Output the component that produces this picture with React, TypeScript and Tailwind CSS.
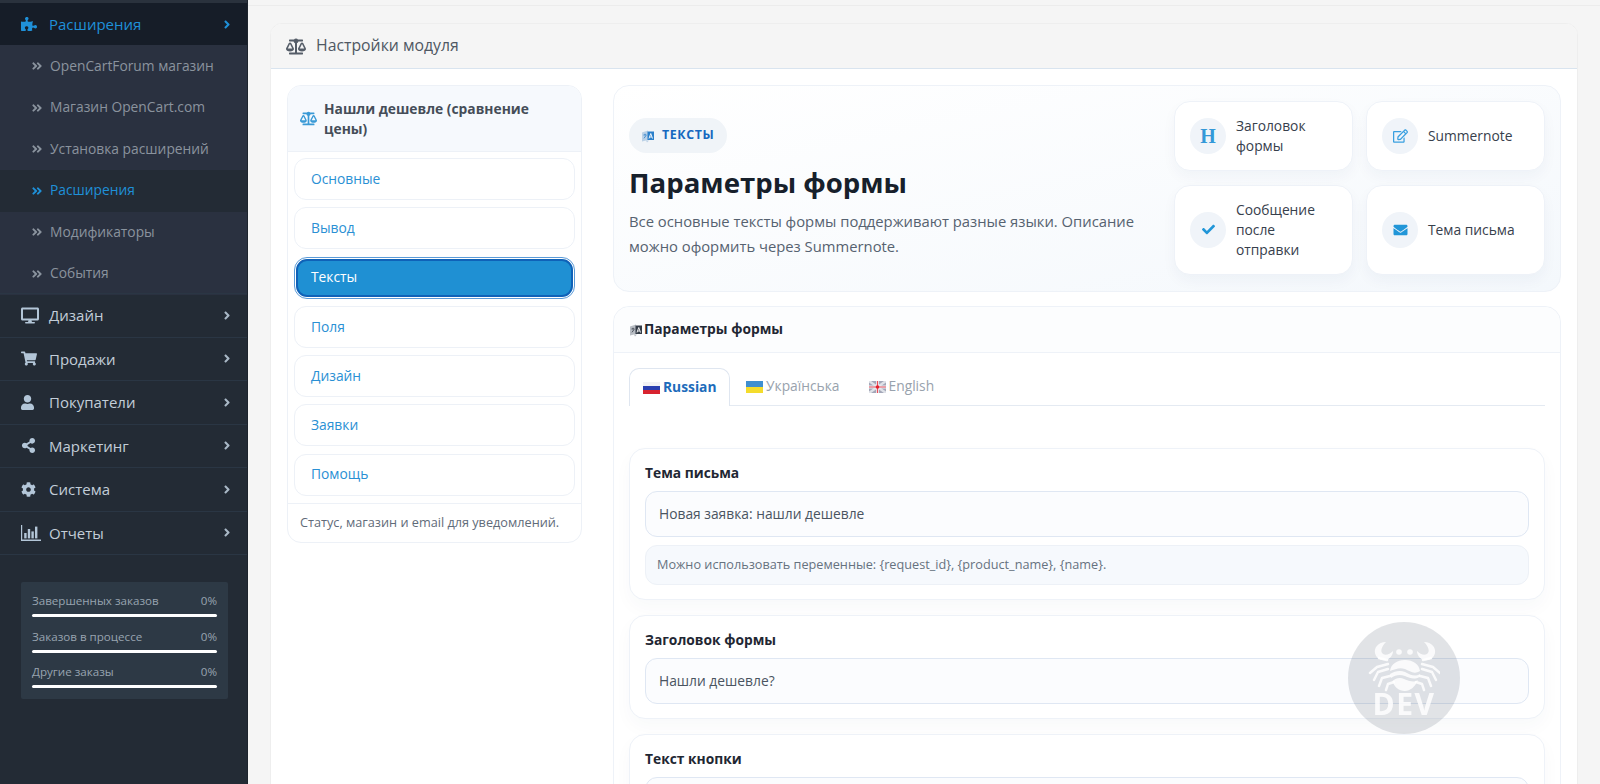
import React from "react";
import {
  FaPuzzlePiece, FaAngleDoubleRight, FaAngleRight, FaDesktop, FaShoppingCart, FaUser, FaShareAlt, FaCog,
  FaBalanceScale, FaCheck, FaEnvelope, FaRegEdit,
} from "react-icons/fa";

const font = { fontFamily: '"Open Sans", "Noto Sans", sans-serif' };

function ChartIcon() {
  return (
    <svg width="20" height="16" viewBox="0 0 20 16" fill="currentColor">
      <path d="M0 0h1.2v14.6H20V16H0z" />
      <rect x="3.2" y="8" width="2.4" height="5.4" />
      <rect x="6.8" y="4" width="2.4" height="9.4" />
      <rect x="10.4" y="6.4" width="2.4" height="7" />
      <rect x="14" y="1.6" width="2.4" height="11.8" />
    </svg>
  );
}

function LangIcon({ className, back, front }: { className?: string; back: string; front: string }) {
  return (
    <svg className={className} viewBox="0 0 14 14">
      <path d="M1 3.500L7 1.500V11L1 12.500z" fill={back} opacity="0.55" />
      <path d="M2.500 6h3M4 4.800V6M3 9.300L5 6.500" stroke={front} strokeWidth="0.8" fill="none" />
      <rect x="6.500" y="2.500" width="6.500" height="8.500" fill={front} />
      <path d="M8 9.500L9.750 4.500L11.500 9.500M8.700 8h2.100" stroke="#ffffff" strokeWidth="0.9" fill="none" />
      <path d="M5 11.500L6 13.500L8 11.500" fill={back} opacity="0.55" />
    </svg>
  );
}

function SubItem({ label, active }: { label: string; active?: boolean }) {
  return (
    <div className={`h-[41.5px] flex items-center pl-[31px] gap-[7px] text-[13.8px] ${active ? "bg-[#232b35] text-[#1f90d8]" : "text-[#8a939e]"}`}>
      <FaAngleDoubleRight className="w-[12px] h-[12px]" />
      <span>{label}</span>
    </div>
  );
}

function MainItem({ icon, label }: { icon: React.ReactNode; label: string }) {
  return (
    <div className="h-[43.5px] flex items-center pl-[21px] pr-[14px] border-b border-[#2a3644] text-[#c2cdd8] text-[15px]">
      <span className="w-[28px] flex items-center text-[#b3c6d8]">{icon}</span>
      <span className="flex-1">{label}</span>
      <FaAngleRight className="w-[12px] h-[13px] text-[#a9b8c6]" />
    </div>
  );
}

function Stat({ label }: { label: string }) {
  return (
    <div className="h-[35.7px]">
      <div className="flex justify-between text-[11.6px] leading-[16px] text-[#98a4b0] pt-[2px]">
        <span>{label}</span>
        <span>0%</span>
      </div>
      <div className="mt-[5px] h-[3px] rounded-full bg-white" />
    </div>
  );
}

function Sidebar() {
  return (
    <aside className="w-[248px] shrink-0 h-full bg-[#232b35] border-r border-[#1d242d]">
      <div className="h-[3px] bg-[#2a323d]" />
      <div className="h-[42px] bg-[#161d28] flex items-center pl-[21px] pr-[14px] text-[#1f90d8] text-[15px]">
        <span className="w-[28px] flex items-center"><FaPuzzlePiece className="w-[16px] h-[16px]" /></span>
        <span className="flex-1">Расширения</span>
        <FaAngleRight className="w-[12px] h-[13px]" />
      </div>
      <div className="bg-[#2a3140] pt-[0.5px]">
        <SubItem label="OpenCartForum магазин" />
        <SubItem label="Магазин OpenCart.com" />
        <SubItem label="Установка расширений" />
        <SubItem label="Расширения" active />
        <SubItem label="Модификаторы" />
        <SubItem label="События" />
      </div>
      <div className="border-t border-[#2a3644] mt-[-1.5px]" />
      <MainItem icon={<FaDesktop className="w-[18px] h-[17px]" />} label="Дизайн" />
      <MainItem icon={<FaShoppingCart className="w-[16px] h-[15px]" />} label="Продажи" />
      <MainItem icon={<FaUser className="w-[13px] h-[15px]" />} label="Покупатели" />
      <MainItem icon={<FaShareAlt className="w-[15px] h-[15px]" />} label="Маркетинг" />
      <MainItem icon={<FaCog className="w-[15px] h-[15px]" />} label="Система" />
      <MainItem icon={<ChartIcon />} label="Отчеты" />
      <div className="ml-[21px] mr-[19px] mt-[27px] h-[117px] rounded-[2px] bg-[#2d3945] px-[11px] pt-[9px]">
        <Stat label="Завершенных заказов" />
        <Stat label="Заказов в процессе" />
        <Stat label="Другие заказы" />
      </div>
    </aside>
  );
}

function NavItem({ label, active }: { label: string; active?: boolean }) {
  if (active) {
    return (
      <div className="h-[42px] rounded-[13px] border border-[#5b9bd8] bg-white p-[1px]">
        <div className="h-full rounded-[11px] bg-[#1f90d3] border-2 border-[#0f62b8] flex items-center pl-[13px] text-white text-[13.8px]">
          {label}
        </div>
      </div>
    );
  }
  return (
    <div className="h-[42px] rounded-[12px] bg-white border border-[#edf1f7] flex items-center pl-[16px] text-[#2a90d4] text-[13.8px]">
      {label}
    </div>
  );
}

function LeftNav() {
  return (
    <div className="w-[295px] shrink-0 self-start rounded-[14px] border border-[#edf1f7] bg-white overflow-hidden">
      <div className="h-[66px] bg-[#f6f9fd] border-b border-[#edf1f7] flex items-center pl-[12px] pr-[10px] gap-[7px]">
        <FaBalanceScale className="w-[17px] h-[15px] shrink-0 text-[#3a9ad6]" />
        <div className="text-[13.8px] leading-[20px] font-bold text-[#454d58]">Нашли дешевле (сравнение цены)</div>
      </div>
      <div className="px-[6px] pt-[6px] pb-[7px] flex flex-col gap-[7.3px]">
        <NavItem label="Основные" />
        <NavItem label="Вывод" />
        <NavItem label="Тексты" active />
        <NavItem label="Поля" />
        <NavItem label="Дизайн" />
        <NavItem label="Заявки" />
        <NavItem label="Помощь" />
      </div>
      <div className="border-t border-[#edf1f7] h-[39px] flex items-center pl-[12px] text-[12.7px] text-[#5f6b79]">
        Статус, магазин и email для уведомлений.
      </div>
    </div>
  );
}

function Tile({ icon, label }: { icon: React.ReactNode; label: React.ReactNode }) {
  return (
    <div className="rounded-[16px] bg-white border border-[#eef2f8] shadow-[0_6px_14px_rgba(30,60,110,0.04)] flex items-center pl-[15px] pr-[20px] gap-[10px]">
      <span className="w-[36px] h-[36px] shrink-0 rounded-full bg-[#f0f4f9] flex items-center justify-center text-[#2196d8]">{icon}</span>
      <span className="text-[13.8px] leading-[20px] text-[#37404c]">{label}</span>
    </div>
  );
}

function Hero() {
  return (
    <div className="h-[207px] rounded-[16px] border border-[#eef2f8] bg-gradient-to-br from-white to-[#f4f8fc] flex pl-[15px] pr-[15px]">
      <div className="flex-1 pt-[32px] pr-[20px]">
        <div className="w-[98px] h-[35px] rounded-full bg-[#f0f4f8] flex items-center pl-[12px] gap-[7px] text-[#1668c0] text-[12.4px] font-bold tracking-[0.6px]">
          <LangIcon className="w-[14px] h-[14px]" back="#8fb4d8" front="#2a7fca" />
          <span>ТЕКСТЫ</span>
        </div>
        <h1 className="mt-[8px] text-[27.6px] leading-[42px] font-bold text-[#17202b]">Параметры формы</h1>
        <p className="mt-[6px] text-[14.8px] leading-[24.500px] text-[#566270]">
          Все основные тексты формы поддерживают разные языки. Описание можно оформить через Summernote.
        </p>
      </div>
      <div className="w-[371px] shrink-0 pt-[15px] grid grid-cols-2 gap-x-[13px] gap-y-[13.5px] grid-rows-[70px_90.500px] content-start">
        <Tile icon={<span className="text-[20px] font-bold leading-none text-[#3498d8]" style={{ fontFamily: '"Liberation Serif", serif' }}>H</span>} label="Заголовок формы" />
        <Tile icon={<FaRegEdit className="w-[15px] h-[14px] text-[#3aa0e0]" />} label="Summernote" />
        <Tile icon={<FaCheck className="w-[13px] h-[13px]" />} label="Сообщение после отправки" />
        <Tile icon={<FaEnvelope className="w-[15px] h-[14px]" />} label="Тема письма" />
      </div>
    </div>
  );
}

function FlagRu() {
  return (
    <svg width="17" height="12" viewBox="0 0 17 12"><rect width="17" height="4" fill="#f2f2f5" /><rect y="4" width="17" height="4" fill="#2a3fb0" /><rect y="8" width="17" height="4" fill="#d8232f" /></svg>
  );
}
function FlagUa() {
  return (
    <svg width="17" height="12" viewBox="0 0 17 12"><rect width="17" height="6" fill="#3f8fd0" /><rect y="6" width="17" height="6" fill="#f4dc2c" /></svg>
  );
}
function FlagEn() {
  return (
    <svg width="17" height="12" viewBox="0 0 17 12">
      <rect width="17" height="12" fill="#a3a7b8" />
      <path d="M0 0l17 12M17 0L0 12" stroke="#dfe2e8" strokeWidth="2.4" />
      <path d="M8.500 0v12M0 6h17" stroke="#eceff4" strokeWidth="3" />
      <path d="M8.500 0v12M0 6h17" stroke="#e8505a" strokeWidth="1.200" />
      <circle cx="8.500" cy="6" r="1.800" fill="#e2202c" />
    </svg>
  );
}

function Tabs() {
  return (
    <div className="flex h-[38px] border-b border-[#e4eaf2] items-stretch text-[13.8px]">
      <div className="w-[101px] h-[38px] rounded-t-[10px] border border-b-0 border-[#dfe6f0] bg-white flex items-center pl-[13px] gap-[3px] font-bold text-[#1d6cbb]">
        <FlagRu /><span>Russian</span>
      </div>
      <div className="flex items-center pl-[16px] gap-[3px] text-[#98a2ad]"><FlagUa /><span>Українська</span></div>
      <div className="flex items-center pl-[29px] gap-[3px] text-[#98a2ad]"><FlagEn /><span>English</span></div>
    </div>
  );
}

function Field({ label, value, hint }: { label: string; value?: string; hint?: string }) {
  return (
    <div className="rounded-[16px] bg-white border border-[#eef2f8] shadow-[0_8px_18px_rgba(30,60,110,0.03)] px-[15px] pt-[14px] pb-[14px]">
      <div className="text-[13.8px] leading-[20px] font-bold text-[#1f2733]">{label}</div>
      <div className="mt-[8px] h-[46px] rounded-[12px] bg-[#fbfcfe] border border-[#dfe7f3] flex items-center pl-[13px] text-[13.8px] text-[#4a5461]">{value}</div>
      {hint && (
        <div className="mt-[8px] h-[40px] rounded-[12px] bg-[#f6f9fd] border border-[#edf1f7] flex items-center pl-[11px] text-[12.7px] text-[#66727f]">{hint}</div>
      )}
    </div>
  );
}

function Watermark() {
  return (
    <div className="fixed left-[1348px] top-[622px] w-[112px] h-[112px] rounded-full bg-[rgba(90,100,115,0.18)] flex flex-col items-center text-white/85">
      <svg width="72" height="54" viewBox="0 0 72 54" className="mt-[18px] shrink-0" fill="none">
        <path d="M18 2C10 2 6 8 7 13C8 18 13 21 18 20C22 19 25 15 25 11C22 14 18 16 15 14C12 12 13 7 18 2z" fill="currentColor" />
        <path transform="translate(74 0) scale(-1 1)" d="M18 2C10 2 6 8 7 13C8 18 13 21 18 20C22 19 25 15 25 11C22 14 18 16 15 14C12 12 13 7 18 2z" fill="currentColor" />
        <circle cx="31" cy="12" r="2.800" fill="currentColor" />
        <circle cx="42" cy="12" r="2.800" fill="currentColor" />
        <path d="M22 31C23 24 29 20 37 20C45 20 51 24 52 31C46 35 42 31 37 29C32 27 27 29 22 31z" fill="currentColor" />
        <path d="M22 34C27 31 32 30 37 32C42 35 47 37 52 34L51.500 37C46 40 42 38 37 36C32 34 27 35 23 38z" fill="currentColor" />
        <path d="M24.500 41C28 38 32 37 36 39C41 41 46 43 50 40C47 47 42 51 37 51C31 51 26 47 24.500 41z" fill="currentColor" />
        <path d="M20 24L9 27L2 33M20 29L10 32L6 40M22 36L14 38L11 46M26 42L20 44L18 50M54 24L65 27L72 33M54 29L64 32L68 40M52 36L60 38L63 46M48 42L54 44L56 50M19 20L11 18M55 20L63 18" stroke="currentColor" strokeWidth="2.400" strokeLinecap="round" strokeLinejoin="round" />
      </svg>
      <div className="text-[30px] leading-[22px] font-bold mt-[-1px] tracking-[1.5px]">DEV</div>
    </div>
  );
}

export default function App() {
  return (
    <div className="w-[1600px] h-[784px] overflow-hidden flex bg-[#f5f5f5]" style={font}>
      <Sidebar />
      <main className="flex-1 min-w-0 h-full">
        <div className="h-[6px] bg-[#f5f5f5] border-b border-[#ececec]" />
        <div className="ml-[22px] mr-[22px] mt-[17px] h-[800px] rounded-t-[12px] bg-white border border-[#eeeeee] overflow-hidden">
          <div className="h-[45px] bg-[#f5f5f5] border-b border-[#d9e4ef] flex items-center pl-[15px] gap-[10px] text-[#4f5863] text-[15.8px]">
            <FaBalanceScale className="w-[20px] h-[17px] text-[#555d68]" />
            <span>Настройки модуля</span>
          </div>
          <div className="flex pl-[16px] pr-[16px] pt-[16px] gap-[31px]">
            <LeftNav />
            <div className="flex-1 min-w-0 flex flex-col gap-[14px]">
              <Hero />
              <section className="rounded-[16px] border border-[#eef2f8] bg-white">
                <div className="h-[46px] bg-[#fcfdfe] border-b border-[#eef2f8] rounded-t-[16px] flex items-center pl-[15px] gap-[1px] text-[13.8px] font-bold text-[#1f2733]">
                  <LangIcon className="w-[14px] h-[14px]" back="#7f8894" front="#333b46" />
                  <span>Параметры формы</span>
                </div>
                <div className="px-[15px] pt-[15px]">
                  <Tabs />
                  <div className="mt-[42px] flex flex-col gap-[15px]">
                    <Field label="Тема письма" value="Новая заявка: нашли дешевле" hint="Можно использовать переменные: {request_id}, {product_name}, {name}." />
                    <Field label="Заголовок формы" value="Нашли дешевле?" />
                    <Field label="Текст кнопки" value="" />
                  </div>
                </div>
              </section>
            </div>
          </div>
        </div>
      </main>
      <Watermark />
    </div>
  );
}
